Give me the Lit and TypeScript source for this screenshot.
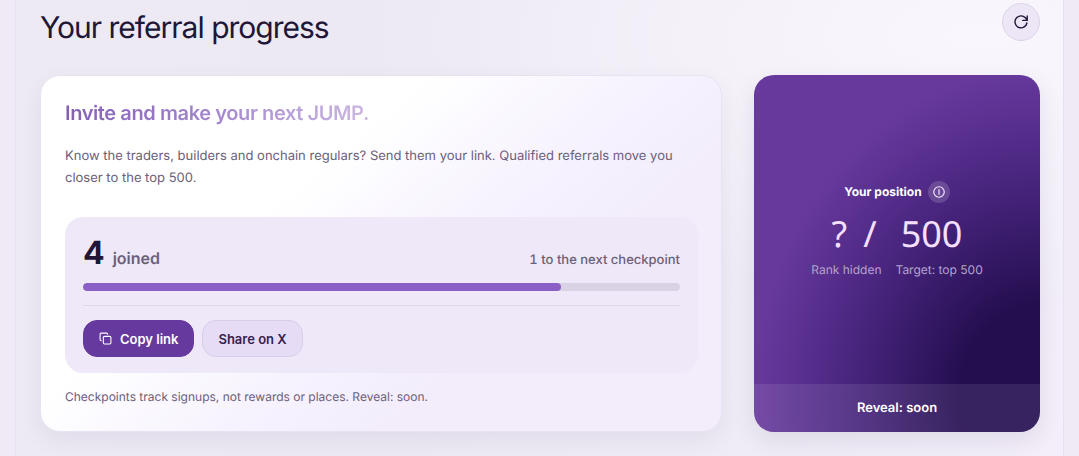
import { LitElement, html, css } from "lit";
import { customElement, state } from "lit/decorators.js";

@customElement("app-root")
export class AppRoot extends LitElement {
  @state() joined = 4;
  @state() checkpoint = 5;

  static styles = css`
    :host {
      display: block;
      min-height: 100vh;
      box-sizing: border-box;
      padding: 0 15px;
      overflow: hidden;
      background: #f0e9f6;
      color: #211636;
      font-family: Inter, sans-serif;
      text-rendering: geometricPrecision;
    }
    * { box-sizing: border-box; margin: 0; }
    .panel {
      min-height: 100vh;
      padding: 2px 23px 24px 24px;
      border: solid #e6e1f0;
      border-width: 0 1px;
      background:
        radial-gradient(ellipse at 92% 8%, #f9f6fd 0%, rgba(249, 246, 253, 0) 45%),
        linear-gradient(100deg, #edeaf4 0%, #ece9f4 40%, #efecf6 75%, #f3eef9 100%);
    }
    .head { display: flex; justify-content: space-between; align-items: center; height: 40px; }
    h1 { padding-top: 11px; font-size: 30px; line-height: 40px; font-weight: 400; letter-spacing: -1px; }
    button { font: inherit; cursor: pointer; }
    .refresh {
      display: grid;
      place-items: center;
      width: 38px;
      height: 38px;
      padding: 0;
      border: 1px solid #dcd3e8;
      border-radius: 50%;
      background: #ede6f7;
      color: #211636;
    }
    .cards { display: grid; grid-template-columns: minmax(0, 1fr) 286px; gap: 32px; margin-top: 33px; }
    .invite {
      padding: 23px 23px 26px 24px;
      border: 1px solid #e8e2f2;
      border-radius: 20px;
      background: linear-gradient(140deg, #ffffff 35%, #f6f2fe 56%, #f3edfb 70%);
      box-shadow: 0 8px 24px rgba(33, 22, 54, 0.06);
    }
    h2 {
      width: fit-content;
      font-size: 20px;
      line-height: 28px;
      font-weight: 600;
      letter-spacing: -0.4px;
      color: transparent;
      background: linear-gradient(90deg, #8460b4, #a487cf 50%, #ccb8e2);
      background-clip: text;
      -webkit-background-clip: text;
    }
    .lead { margin-top: 18px; font-size: 13px; line-height: 22px; color: #6b607a; }
    .progress { margin-top: 28px; padding: 18px 18px 16px; border-radius: 18px; background: #efe8f8; }
    .counts { display: flex; justify-content: space-between; align-items: baseline; line-height: 36px; }
    .total { display: flex; align-items: baseline; gap: 8px; font-size: 16px; font-weight: 600; color: #6b607a; }
    .total strong { font-size: 32px; font-weight: 700; color: #211636; }
    .next { font-size: 13px; font-weight: 500; font-variant-numeric: tabular-nums; color: #6b607a; }
    .track { height: 8px; margin-top: 5px; border-radius: 4px; background: #d9d2e4; overflow: hidden; }
    .fill { height: 100%; border-radius: 4px; background: #8b5fc5; }
    .actions { display: flex; gap: 8px; margin-top: 14px; padding-top: 14px; border-top: 1px solid #ded6ea; }
    .action {
      display: flex;
      align-items: center;
      gap: 8px;
      height: 37px;
      padding: 0 15px;
      border: 1px solid #d9cdea;
      border-radius: 14px;
      background: #e6dcf5;
      color: #36224f;
      font-size: 13px;
      font-weight: 600;
    }
    .primary { border-color: #65399e; background: #65399e; color: #fff; }
    .note { margin-top: 16px; font-size: 12px; line-height: 16px; color: #6b607a; }
    .position {
      display: flex;
      flex-direction: column;
      border-radius: 20px;
      overflow: hidden;
      color: #fff;
      background: radial-gradient(ellipse 100% 92% at 100% 90%, #240e50 28%, #4a2680 68%, #67399d 100%);
      box-shadow: 0 8px 24px rgba(33, 22, 54, 0.09);
    }
    .rank { flex: 1; display: flex; flex-direction: column; align-items: center; justify-content: center; }
    .title { display: flex; align-items: center; gap: 6px; font-size: 12px; font-weight: 700; }
    .info {
      display: grid;
      place-items: center;
      width: 22px;
      height: 22px;
      padding: 0;
      border: 0;
      border-radius: 50%;
      background: rgba(255, 255, 255, 0.16);
      color: #f6e8ff;
    }
    .score {
      display: flex;
      gap: 16px;
      margin-top: 9px;
      font-family: "Noto Sans", sans-serif;
      font-size: 36px;
      line-height: 44px;
      color: #f6e0ff;
    }
    .limit { margin-left: 8px; }
    .facts { display: flex; gap: 14px; margin-top: 5px; font-size: 12px; line-height: 18px; color: #b5a2cf; }
    .reveal { padding: 14px; background: rgba(255, 255, 255, 0.09); font-size: 13px; line-height: 20px; font-weight: 600; text-align: center; }
    svg { display: block; fill: none; stroke: currentColor; stroke-linecap: round; stroke-linejoin: round; }
  `;

  render() {
    return html`
      <main class="panel">
        <header class="head">
          <h1>Your referral progress</h1>
          <button class="refresh" aria-label="Refresh">
            <svg width="16" height="16" viewBox="0 0 16 16" stroke-width="1.4"><path d="M13.900 9a6 6 0 1 1-1.500-5.200L14.200 6.200M14.200 2v4.400H9.800" /></svg>
          </button>
        </header>
        <div class="cards">
          <section class="invite">
            <h2>Invite and make your next JUMP.</h2>
            <p class="lead">Know the traders, builders and onchain regulars? Send them your link. Qualified referrals move you closer to the top 500.</p>
            <div class="progress">
              <div class="counts">
                <p class="total"><strong>${this.joined}</strong><span>joined</span></p>
                <p class="next">${this.checkpoint - this.joined} to the next checkpoint</p>
              </div>
              <div class="track" role="progressbar" aria-label="Referrals joined" aria-valuemin="0" aria-valuemax=${this.checkpoint} aria-valuenow=${this.joined}>
                <div class="fill" style="width:${(this.joined / this.checkpoint) * 100}%"></div>
              </div>
              <div class="actions">
                <button class="action primary">
                  <svg width="13" height="13" viewBox="0 0 24 24" stroke-width="2"><rect x="8" y="8" width="14" height="14" rx="2" /><path d="M4 16c-1.100 0-2-.9-2-2V4c0-1.100.9-2 2-2h10c1.100 0 2 .9 2 2" /></svg>
                  Copy link
                </button>
                <button class="action">Share on X</button>
              </div>
            </div>
            <p class="note">Checkpoints track signups, not rewards or places. Reveal: soon.</p>
          </section>
          <aside class="position">
            <div class="rank">
              <div class="title">
                <span>Your position</span>
                <button class="info" aria-label="About your position">
                  <svg width="14" height="14" viewBox="0 0 24 24" stroke-width="2"><circle cx="12" cy="12" r="9" /><path d="M12 8v8" /></svg>
                </button>
              </div>
              <p class="score"><span>?</span><span>/</span><span class="limit">500</span></p>
              <p class="facts"><span>Rank hidden</span><span>Target: top 500</span></p>
            </div>
            <p class="reveal">Reveal: soon</p>
          </aside>
        </div>
      </main>
    `;
  }
}
